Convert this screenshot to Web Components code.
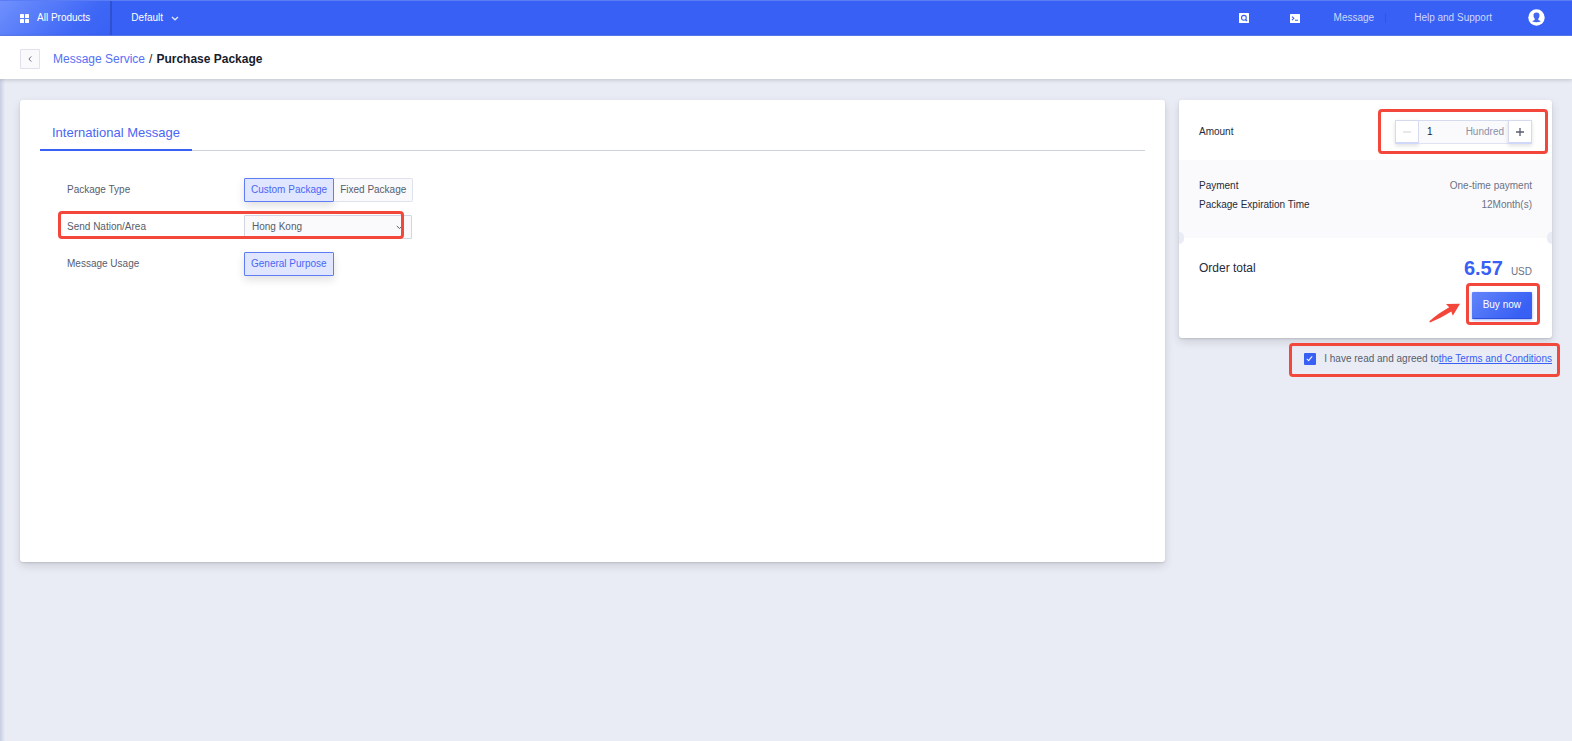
<!DOCTYPE html>
<html lang="en">
<head>
<meta charset="utf-8">
<meta name="viewport" content="width=device-width, initial-scale=1">
<title>Purchase Package</title>
<style>
  body {
    margin: 0;
    color: #575d6c;
    background: #e9ecf5;
    font: 10px/16px "Liberation Sans", Arial, sans-serif;
  }
</style>
</head>
<body>
<purchase-page></purchase-page>

<template id="tpl-top-bar">
  <style>
    :host {
      display: flex;
      height: 36px;
      box-sizing: border-box;
      border-top: 1px solid #5a7cf5;
      border-bottom: 1px solid #5a7cf5;
      background: #3860f4;
      color: #fff;
    }
    button {
      display: flex;
      align-items: center;
      gap: 8px;
      margin: 0;
      padding: 0 19px;
      border: 0;
      background: none;
      color: inherit;
      font: inherit;
      cursor: pointer;
    }
    .products {
      padding: 0 20px;
      border-right: 2px solid #2f51cf;
      background: linear-gradient(135deg, #6f90fd 0%, #4068f6 70%, #3860f4 100%);
    }
    nav {
      display: flex;
      align-items: center;
      margin-left: auto;
      padding-right: 27px;
    }
    nav button { padding: 0; }
    nav a {
      color: #cdd7fd;
      text-decoration: none;
    }
    .search { margin-right: 41px; }
    .shell { margin-right: 34px; }
    .message {
      padding-right: 11px;
      border-right: 1px solid #3156de;
      line-height: 10px;
    }
    .help { margin: 0 36px 0 28px; }
    svg { display: block; }
  </style>
  <button class="products">
    <svg width="9" height="9" viewBox="0 0 9 9" fill="#fff">
      <rect width="4" height="4" rx=".6"/><rect x="5" width="4" height="4" rx=".6"/>
      <rect y="5" width="4" height="4" rx=".6"/><rect x="5" y="5" width="4" height="4" rx=".6"/>
    </svg>
    All Products
  </button>
  <button>
    Default
    <svg width="8" height="5" viewBox="0 0 8 5" fill="none" stroke="#dfe6ff" stroke-width="1.3"><path d="M1 1l3 2.8L7 1"/></svg>
  </button>
  <nav>
    <button class="search" aria-label="Search">
      <svg width="10" height="10" viewBox="0 0 10 10" fill="none">
        <rect width="10" height="10" rx=".6" fill="#fff"/>
        <circle cx="4.9" cy="4.8" r="2.4" stroke="#3860f4" stroke-width="1.1"/>
        <path d="M6.5 6.5L8 8" stroke="#3860f4" stroke-width="1.2"/>
      </svg>
    </button>
    <button class="shell" aria-label="Cloud shell">
      <svg width="10" height="9" viewBox="0 0 10 9" fill="none">
        <rect width="10" height="9" rx=".6" fill="#fff"/>
        <path d="M2 2.6l1.800 1.700L2 6M5 6.200h3" stroke="#3860f4" stroke-width="1.1"/>
      </svg>
    </button>
    <a class="message" href="#message">Message</a>
    <a class="help" href="#help">Help and Support</a>
    <button aria-label="Account">
      <svg width="17" height="18" viewBox="0 0 17 18">
        <circle cx="8.5" cy="8.5" r="8.2" fill="#fff"/>
        <path d="M8.5 3.500c2.100 0 3.100 1.300 3 3.100 0 1.400-.5 2.500-1.200 3.200v1.100l2.700 1.300c-2.500 1.400-6.500 1.400-9 0l2.700-1.300V9.800C6 9.100 5.500 8 5.500 6.600c-.1-1.800.9-3.100 3-3.100z" fill="#4568ee"/>
      </svg>
    </button>
  </nav>
</template>

<template id="tpl-page-head">
  <style>
    :host {
      display: flex;
      align-items: center;
      height: 43px;
      padding: 0 20px;
      background: #fff;
      box-shadow: 0 1px 4px rgba(0, 0, 0, .18);
      position: relative;
      color: #171c2c;
      font-size: 12px;
    }
    button {
      display: flex;
      align-items: center;
      justify-content: center;
      width: 20px;
      height: 20px;
      margin: 2px 13px 0 0;
      padding: 0;
      border: 1px solid #dfe1ec;
      border-radius: 1px;
      background: #fafafc;
      cursor: pointer;
    }
    nav {
      display: flex;
      gap: 4px;
      padding-top: 2px;
    }
    ::slotted(a) {
      color: #5670f5;
      text-decoration: none;
    }
  </style>
  <button aria-label="Back">
    <svg width="4" height="6" viewBox="0 0 4 6" fill="none" stroke="#6c7284"><path d="M3.300.4L.9 3l2.400 2.600"/></svg>
  </button>
  <nav aria-label="Breadcrumb"><slot></slot></nav>
</template>

<!-- Red frame drawn over whatever is slotted in. --inset sets its reach. -->
<template id="tpl-mark-box">
  <style>
    :host {
      display: block;
      position: relative;
    }
    .frame {
      position: absolute;
      inset: var(--inset, -8px);
      border: 3px solid #f2473a;
      border-radius: 4px;
      pointer-events: none;
    }
    .arrow {
      display: none;
      position: absolute;
      right: calc(100% + 12px);
      top: 11px;
    }
    :host([arrow]) .arrow { display: block; }
  </style>
  <slot></slot>
  <div class="frame"></div>
  <svg class="arrow" width="31" height="20" viewBox="0 0 31 20" fill="#f2473a">
    <path d="M31 .8L17 1l3.200 3.200C13 8.300 6 13 .3 18.300L1 19.400C8.500 16 15.500 12.800 22.300 8.400l1.500 4.300z"/>
  </svg>
</template>

<template id="tpl-form-row">
  <style>
    :host {
      display: flex;
      align-items: center;
      width: fit-content;
    }
    .label { width: 177px; }
    .field { display: flex; }
  </style>
  <div class="label"><slot name="label"></slot></div>
  <div class="field"><slot></slot></div>
</template>

<template id="tpl-option-button">
  <style>
    :host { display: block; }
    button {
      height: 24px;
      margin: 0;
      padding: 0 6px;
      border: 1px solid #dfe1ec;
      border-left: 0;
      border-radius: 0 2px 2px 0;
      background: #fafafc;
      color: #575d6c;
      font: inherit;
      cursor: pointer;
    }
    button[aria-pressed="true"] {
      border: 1px solid #5e7cf5;
      border-radius: 1px;
      background: #e0e6ff;
      color: #4a66f4;
      box-shadow: 0 4px 8px rgba(0, 0, 0, .12);
    }
  </style>
  <button><slot></slot></button>
</template>

<template id="tpl-package-form">
  <style>
    :host {
      display: block;
      box-sizing: border-box;
      min-height: 462px;
      padding: 18px 20px 20px;
      border-radius: 3px;
      background: #fff;
      box-shadow: 0 1px 2px rgba(0, 0, 0, .12), 0 4px 10px rgba(0, 0, 0, .12);
    }
    .tabs {
      display: flex;
      border-bottom: 1px solid #cdd0dd;
    }
    .tabs button {
      height: 33px;
      margin: 0 0 -1px;
      padding: 0 12px 2px;
      border: 0;
      border-bottom: 2px solid #3860f4;
      background: none;
      color: #4a66f4;
      font: inherit;
      font-size: 13px;
      cursor: pointer;
    }
    form {
      display: flex;
      flex-direction: column;
      align-items: flex-start;
      gap: 13px;
      padding: 27px 27px 0;
    }
    mark-box { --inset: -4px 8px 0 -9px; }
    .select {
      position: relative;
      width: 168px;
    }
    select {
      appearance: none;
      width: 100%;
      height: 24px;
      padding: 0 7px;
      border: 1px solid #d3d6e2;
      border-radius: 1px;
      background: #fafafc;
      color: inherit;
      font: inherit;
    }
    .select svg {
      position: absolute;
      right: 9px;
      top: 10px;
      pointer-events: none;
    }
  </style>
  <div class="tabs" role="tablist"><button role="tab" aria-selected="true">International Message</button></div>
  <form>
    <form-row role="group" aria-label="Package Type">
      <span slot="label">Package Type</span>
      <option-button pressed>Custom Package</option-button>
      <option-button>Fixed Package</option-button>
    </form-row>
    <mark-box>
      <form-row>
        <label slot="label" for="area">Send Nation/Area</label>
        <div class="select">
          <select id="area"><option>Hong Kong</option></select>
          <svg width="7" height="5" viewBox="0 0 7 5" fill="none" stroke="#575d6c"><path d="M.8 1l2.700 2.500L6.200 1"/></svg>
        </div>
      </form-row>
    </mark-box>
    <form-row role="group" aria-label="Message Usage">
      <span slot="label">Message Usage</span>
      <option-button pressed>General Purpose</option-button>
    </form-row>
  </form>
</template>

<template id="tpl-amount-stepper">
  <style>
    :host {
      display: flex;
      width: 137px;
      height: 24px;
    }
    button {
      display: flex;
      align-items: center;
      justify-content: center;
      width: 24px;
      margin: 0;
      padding: 0;
      border: 1px solid #d5daee;
      border-bottom: 2px solid #cfd8fb;
      border-radius: 1px;
      background: #fff;
      color: #575d70;
      box-shadow: 0 2px 4px rgba(0, 0, 0, .12);
      cursor: pointer;
    }
    button:disabled { color: #d0d1d8; }
    .value {
      display: flex;
      flex: 1;
      align-items: center;
      min-width: 0;
      padding: 0 4px 0 8px;
      border-top: 1px solid #d5daee;
      border-bottom: 1px solid #dfe3f5;
      background: #fafafc;
      color: #8a91a8;
    }
    input {
      flex: 1;
      width: 0;
      padding: 0;
      border: 0;
      outline: 0;
      background: none;
      color: #171c2c;
      font: inherit;
    }
  </style>
  <button class="minus" type="button" aria-label="Less" disabled>
    <svg width="8" height="8" viewBox="0 0 8 8" stroke="currentColor"><path d="M0 4h8"/></svg>
  </button>
  <div class="value"><input value="1" aria-label="Amount"><span>Hundred</span></div>
  <button class="plus" type="button" aria-label="More">
    <svg width="8" height="8" viewBox="0 0 8 8" stroke="currentColor" stroke-width="1.300"><path d="M0 4h8M4 0v8"/></svg>
  </button>
</template>

<template id="tpl-order-summary">
  <style>
    :host {
      display: block;
      color: #252b3a;
    }
    .card {
      border-radius: 3px;
      background: #fff;
      box-shadow: 0 1px 2px rgba(0, 0, 0, .12), 0 4px 10px rgba(0, 0, 0, .12);
    }
    .line {
      display: flex;
      align-items: center;
      justify-content: space-between;
    }
    .amount { padding: 20px 20px 16px; }
    .amount mark-box { --inset: -11px -16px -10px -17px; }
    .facts {
      position: relative;
      padding: 16px 20px 24px;
      background: #fafafc;
      line-height: 19px;
    }
    .facts span:last-child { color: #6c7284; }
    /* ticket notches on both edges of the card */
    .facts::before,
    .facts::after {
      content: "";
      position: absolute;
      bottom: -6px;
      width: 5px;
      height: 12px;
      background: #e9ecf5;
    }
    .facts::before {
      left: 0;
      border-radius: 0 6px 6px 0;
    }
    .facts::after {
      right: 0;
      border-radius: 6px 0 0 6px;
    }
    .total {
      display: flex;
      flex-direction: column;
      gap: 12px;
      padding: 18px 20px 19px;
    }
    .total .line {
      height: 24px;
      font-size: 12px;
    }
    .price {
      display: flex;
      align-items: baseline;
      gap: 8px;
      color: #6c7284;
      font-size: 10px;
    }
    .price b {
      color: #3860f4;
      font-size: 20px;
      line-height: 24px;
    }
    .total mark-box {
      --inset: -9px -8px -6px -6px;
      align-self: flex-end;
    }
    .buy {
      display: block;
      height: 27px;
      margin: 0;
      padding: 0 11px;
      border: 0;
      border-bottom: 1px solid #2c50dc;
      border-radius: 1px;
      background: linear-gradient(135deg, #6384fa, #3860f4 80%);
      color: #fff;
      font: inherit;
      box-shadow: 0 1px 3px rgba(56, 96, 244, .5);
      cursor: pointer;
    }
    .terms {
      --inset: -8px -8px -10px -15px;
      width: fit-content;
      margin: 13px 0 0 auto;
      color: #575d6c;
    }
    .terms div {
      display: flex;
      align-items: center;
    }
    .terms input {
      appearance: none;
      width: 12px;
      height: 12px;
      margin: 0 8px 0 0;
      border-radius: 1px;
      background: #3860f4;
    }
    .terms input:checked::before {
      content: "";
      display: block;
      width: 2px;
      height: 5px;
      margin: 2px 0 0 4px;
      border: solid #fff;
      border-width: 0 1px 1px 0;
      transform: rotate(40deg);
    }
    a { color: #3860f4; }
  </style>
  <div class="card">
    <div class="line amount">
      <span>Amount</span>
      <mark-box><amount-stepper></amount-stepper></mark-box>
    </div>
    <div class="facts">
      <div class="line"><span>Payment</span><span>One-time payment</span></div>
      <div class="line"><span>Package Expiration Time</span><span>12Month(s)</span></div>
    </div>
    <div class="total">
      <div class="line"><span>Order total</span><span class="price"><b>6.57</b><span>USD</span></span></div>
      <mark-box arrow><button class="buy">Buy now</button></mark-box>
    </div>
  </div>
  <mark-box class="terms">
    <div><input type="checkbox" id="agree" checked><label for="agree">I have read and agreed to</label><a href="#terms">the Terms and Conditions</a></div>
  </mark-box>
</template>

<template id="tpl-purchase-page">
  <style>
    :host {
      display: flex;
      flex-direction: column;
      min-height: 100vh;
    }
    main {
      display: flex;
      flex: 1;
      align-items: flex-start;
      gap: 14px;
      padding: 21px 20px;
      background: linear-gradient(90deg, #c8cee2, #e9ecf5 5px);
    }
    package-form {
      flex: 1;
      min-width: 0;
    }
    order-summary { width: 373px; }
  </style>
  <top-bar></top-bar>
  <page-head>
    <a href="#service">Message Service</a>
    <span>/</span>
    <b>Purchase Package</b>
  </page-head>
  <main>
    <package-form></package-form>
    <order-summary></order-summary>
  </main>
</template>

<script>
class BaseElement extends HTMLElement {
  constructor() {
    super();
    let shadowRoot = this.attachShadow({ mode: 'open' });
    const tpl = document.getElementById('tpl-' + this.localName);
    shadowRoot.appendChild(document.importNode(tpl.content, true));
  }
}

class TopBar extends BaseElement {}
class PageHead extends BaseElement {}
class MarkBox extends BaseElement {}
class FormRow extends BaseElement {}
class PackageForm extends BaseElement {}
class OrderSummary extends BaseElement {}
class PurchasePage extends BaseElement {}

class OptionButton extends BaseElement {
  static get observedAttributes() {
    return ['pressed'];
  }

  connectedCallback() {
    this.button = this.shadowRoot.querySelector('button');
    this.button.type = 'button';
    this.update();
    this.addEventListener('click', this.select);
  }

  disconnectedCallback() {
    this.removeEventListener('click', this.select);
  }

  attributeChangedCallback() {
    if (this.button) this.update();
  }

  update() {
    this.button.setAttribute('aria-pressed', this.hasAttribute('pressed'));
  }

  select() {
    this.parentNode.querySelectorAll('option-button').forEach(item => {
      item.toggleAttribute('pressed', item === this);
    });
  }
}

class AmountStepper extends BaseElement {
  connectedCallback() {
    this.input = this.shadowRoot.querySelector('input');
    this.minus = this.shadowRoot.querySelector('.minus');
    this.minus.onclick = () => this.step(-1);
    this.shadowRoot.querySelector('.plus').onclick = () => this.step(1);
  }

  step(by) {
    const value = Math.max(1, (parseInt(this.input.value, 10) || 1) + by);
    this.input.value = value;
    this.minus.disabled = value === 1;
  }
}

customElements.define('top-bar', TopBar);
customElements.define('page-head', PageHead);
customElements.define('mark-box', MarkBox);
customElements.define('form-row', FormRow);
customElements.define('option-button', OptionButton);
customElements.define('package-form', PackageForm);
customElements.define('amount-stepper', AmountStepper);
customElements.define('order-summary', OrderSummary);
customElements.define('purchase-page', PurchasePage);
</script>
</body>
</html>
